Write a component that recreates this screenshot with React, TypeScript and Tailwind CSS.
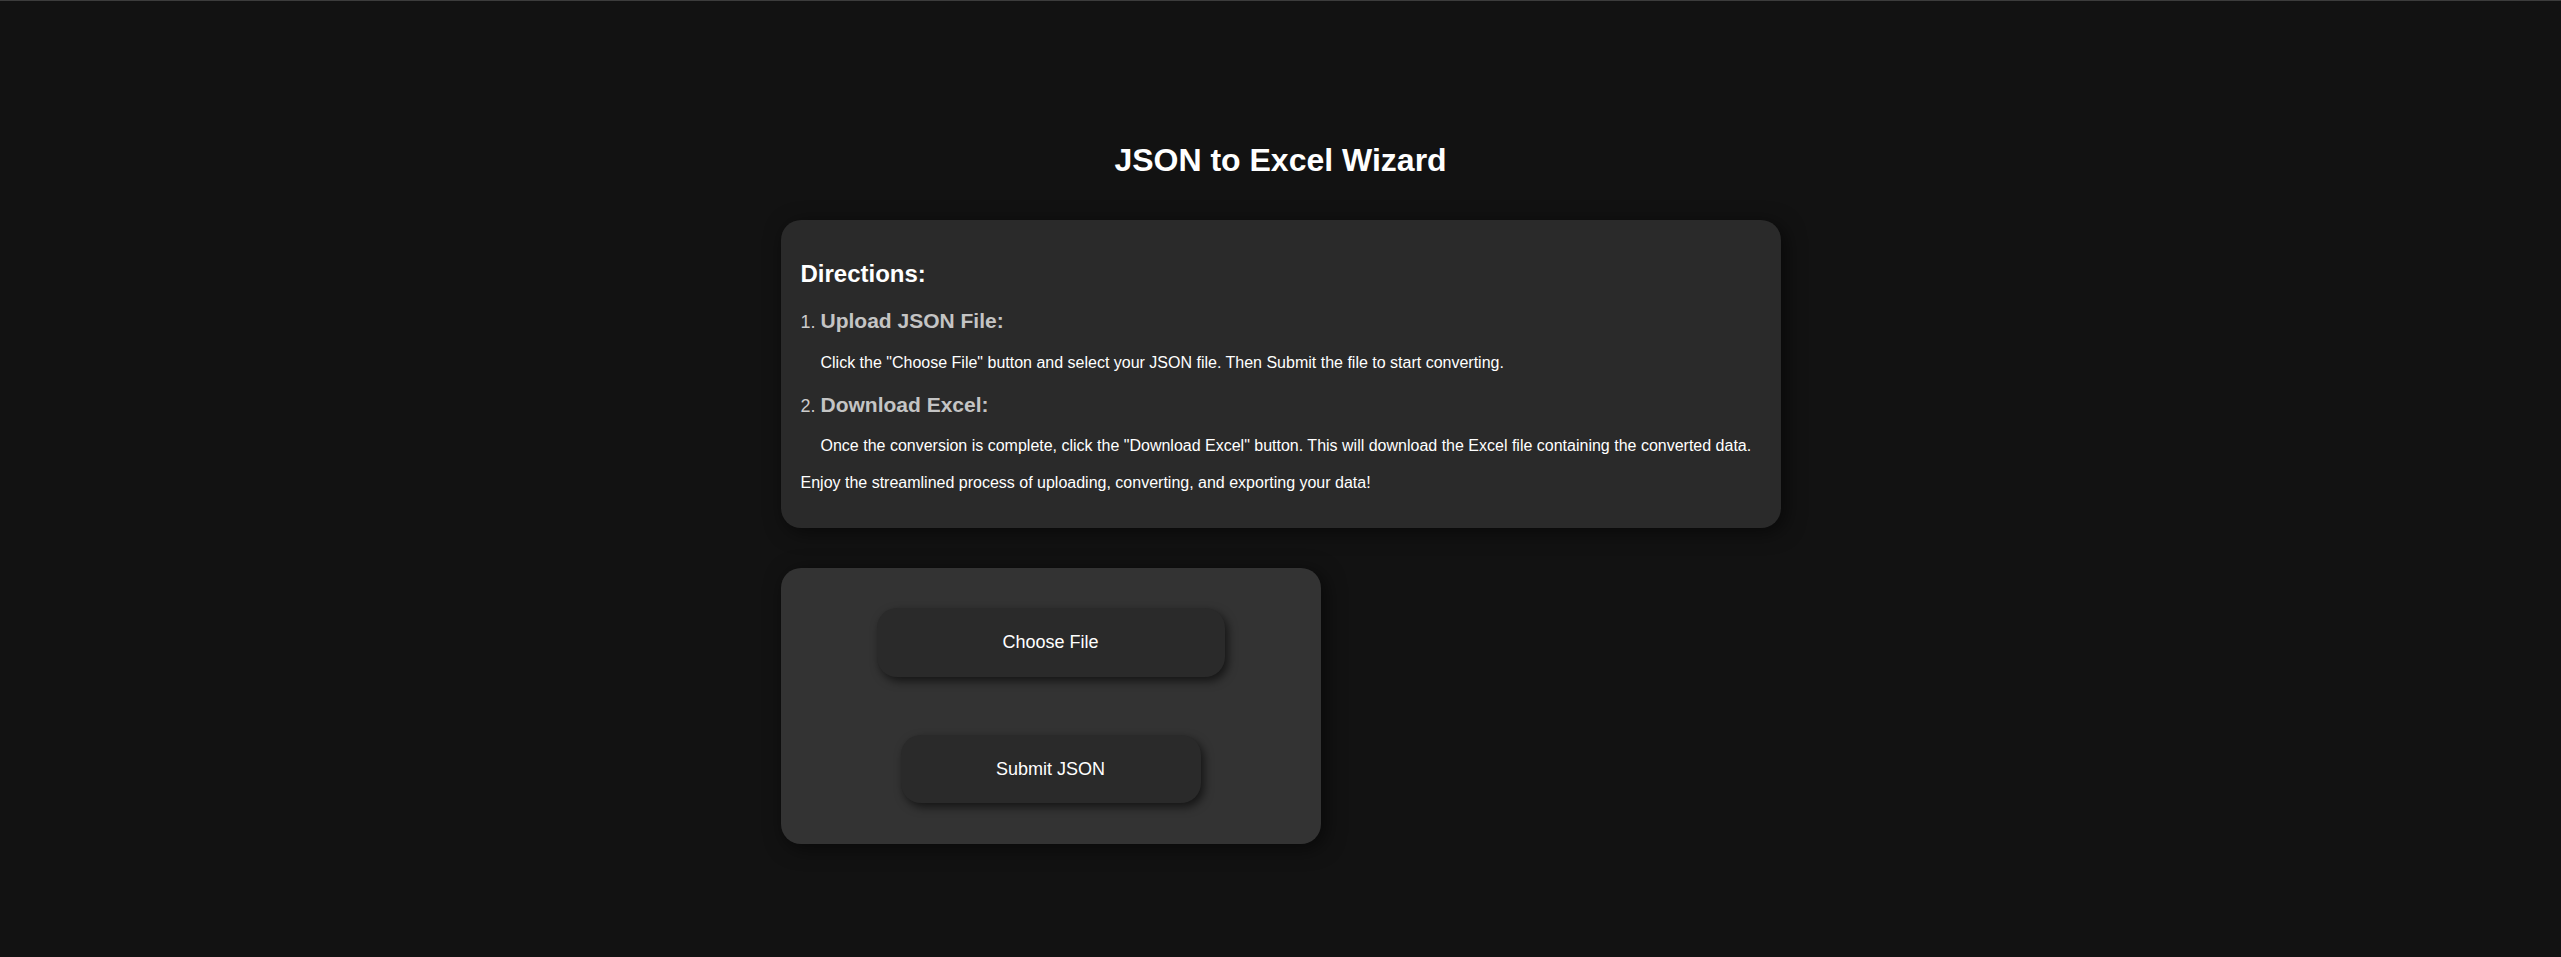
const steps = [
  {
    title: "Upload JSON File:",
    text: 'Click the "Choose File" button and select your JSON file. Then Submit the file to start converting.',
    gap: "mt-[20px]",
  },
  {
    title: "Download Excel:",
    text: 'Once the conversion is complete, click the "Download Excel" button. This will download the Excel file containing the converted data.',
    gap: "mt-[19px]",
  },
];

export default function App() {
  return (
    <div className="min-h-screen border-t border-[#3c3c3c] bg-[#121212] pt-[139px] font-['Liberation_Sans',Arial,sans-serif] text-white">
      <h1 className="text-center text-[32px] font-bold leading-[40px]">JSON to Excel Wizard</h1>

      <main className="mx-auto mt-[40px] w-[1000px]">
        <section className="rounded-[20px] bg-[#2a2a2a] px-5 pt-5 pb-[35px] shadow-[4px_4px_20px_rgba(0,0,0,0.55)]">
          <h2 className="mt-5 text-[24px] font-bold leading-[28px]">Directions:</h2>
          <ol className="mt-[21px] list-outside list-decimal pl-[20px] text-[18px] text-[#cccccc] marker:text-[#cccccc]">
            {steps.map((step, i) => (
              <li key={step.title} className={i > 0 ? "mt-[20px]" : ""}>
                <h3 className="text-[21px] font-bold leading-[24px] text-[#c4c4c4]">{step.title}</h3>
                <p className={`${step.gap} text-[16px] leading-[20px] text-white`}>{step.text}</p>
              </li>
            ))}
          </ol>
          <p className="mt-[17px] text-[16px] leading-[20px]">
            Enjoy the streamlined process of uploading, converting, and exporting your data!
          </p>
        </section>

        <section className="mt-[40px] flex h-[276px] w-[540px] flex-col items-center rounded-[20px] bg-[#333333] pt-[40px] shadow-[4px_4px_20px_rgba(0,0,0,0.55)]">
          <label className="flex h-[69px] w-[348px] cursor-pointer items-center justify-center rounded-[20px] bg-[#2a2a2a] text-[18px] shadow-[3px_4px_10px_rgba(0,0,0,0.6)]">
            Choose File
            <input type="file" accept=".json" className="hidden" />
          </label>
          <button
            type="button"
            className="mt-[58px] flex h-[68px] w-[300px] items-center justify-center rounded-[20px] bg-[#2a2a2a] text-[18px] text-white shadow-[3px_4px_10px_rgba(0,0,0,0.6)]"
          >
            Submit JSON
          </button>
        </section>
      </main>
    </div>
  );
}
